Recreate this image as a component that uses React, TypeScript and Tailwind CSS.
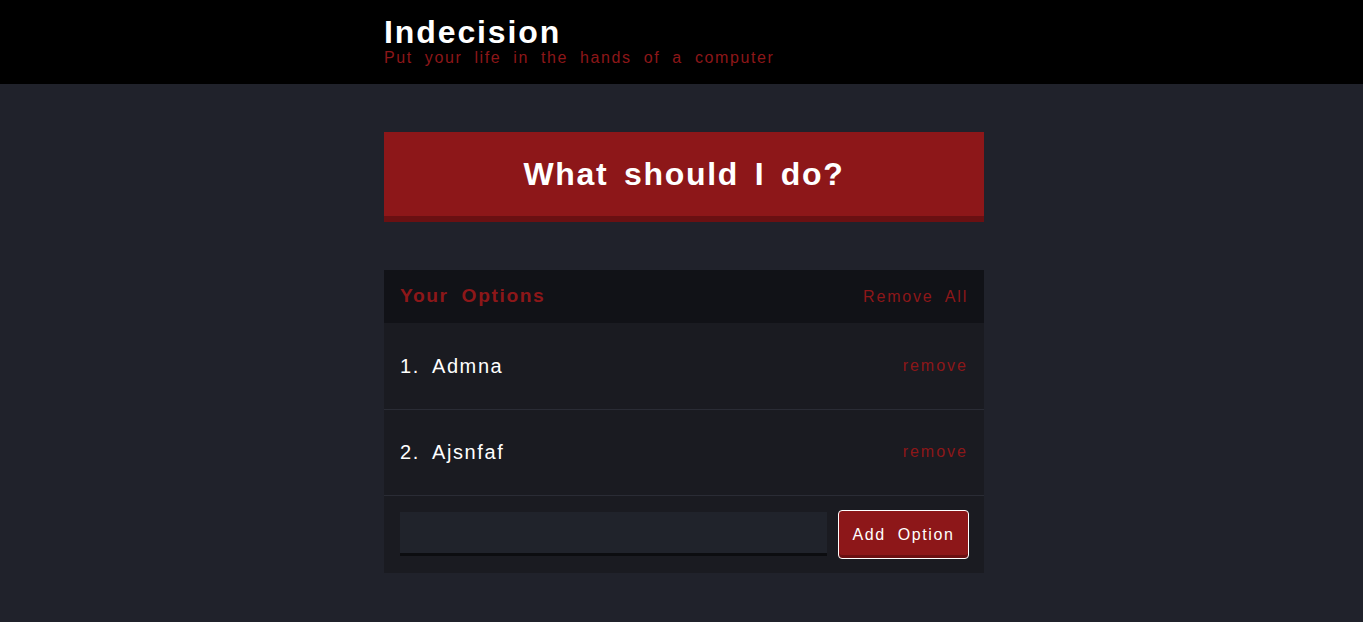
import React from "react";

const options = ["Admna", "Ajsnfaf"];

const App = () => {
  return (
    <div
      className="min-h-screen bg-[#20222b] text-white tracking-[1.6px] [word-spacing:6px]"
      style={{ fontFamily: '"Liberation Sans", Arial, sans-serif' }}
    >
      <header className="bg-black h-[84px] pt-4">
        <div className="w-[605px] pl-[5px] mx-auto">
          <h1 className="text-[32px] leading-8 font-bold tracking-[1.9px]">Indecision</h1>
          <h2 className="text-base leading-4 mt-[2px] text-[#8d1719]">
            Put your life in the hands of a computer
          </h2>
        </div>
      </header>

      <main className="w-[605px] pl-[5px] mx-auto pt-12">
        <button className="w-full h-[90px] flex items-center justify-center bg-[#8d1719] border-b-[6px] border-[#6a1012] text-[32px] font-bold text-white tracking-[1.7px] [word-spacing:5px]">
          What should I do?
        </button>

        <div className="mt-12 bg-[#1a1b21]">
          <div className="h-[53px] bg-[#111217] px-4 flex items-center justify-between">
            <h3 className="text-[19.2px] font-bold text-[#8d1719]">Your Options</h3>
            <button className="text-base text-[#8d1719] tracking-[1.8px] [word-spacing:6px]">
              Remove All
            </button>
          </div>

          {options.map((opt, i) => (
            <div
              key={opt}
              className="h-[86.5px] px-4 flex items-center justify-between border-b border-[#2a2c35]"
            >
              <p className="text-[20px] text-white">
                {i + 1}. {opt}
              </p>
              <button className="text-base text-[#8d1719] tracking-[2px] [word-spacing:6px]">
                remove
              </button>
            </div>
          ))}

          <form className="h-[77px] pl-4 pr-[15px] flex items-center gap-[11px]">
            <input
              type="text"
              className="flex-1 h-[44px] -mt-px bg-[#20232b] border-b-[3px] border-[#0c0d10] outline-none text-white px-2"
            />
            <button
              type="button"
              className="w-[131px] h-[49px] rounded-[4px] border border-white bg-[#8d1719] shadow-[inset_0_-3px_0_#6a1012] text-base text-white [word-spacing:6px]"
            >
              Add Option
            </button>
          </form>
        </div>
      </main>
    </div>
  );
};

export default App;
